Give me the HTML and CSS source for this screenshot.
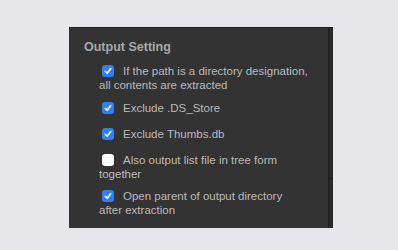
FILE: index.html
```html
<!DOCTYPE html>
<html lang="en">
<head>
    <meta charset="UTF-8">
    <title>Output Setting</title>
    <link rel="stylesheet" href="styles.css">
</head>
<body>
    <div class="window">
        <div class="panel">
            <h4 class="title">Output Setting</h4>
            <div class="options">
                <label class="option"><span class="check on"><svg viewBox="0 0 12 12"><path d="M3.2 6.3 L5.2 8.3 L8.8 3.6"/></svg></span>If the path is a directory designation, all contents are extracted</label>
                <label class="option"><span class="check on"><svg viewBox="0 0 12 12"><path d="M3.2 6.3 L5.2 8.3 L8.8 3.6"/></svg></span>Exclude .DS_Store</label>
                <label class="option"><span class="check on"><svg viewBox="0 0 12 12"><path d="M3.2 6.3 L5.2 8.3 L8.8 3.6"/></svg></span>Exclude Thumbs.db</label>
                <label class="option"><span class="check"></span>Also output list file in tree form together</label>
                <label class="option"><span class="check on"><svg viewBox="0 0 12 12"><path d="M3.2 6.3 L5.2 8.3 L8.8 3.6"/></svg></span>Open parent of output directory <span class="keep">after extraction</span></label>
            </div>
        </div>
        <div class="scrollbar">
            <div class="thumb-edge"></div>
        </div>
    </div>
</body>
</html>
```

FILE: styles.css
```css
* {
    margin: 0;
    padding: 0;
    box-sizing: border-box;
}

body {
    font-family: 'Liberation Sans', Arial, sans-serif;
    background-color: #e6e6eb;
    width: 398px;
    height: 250px;
    overflow: hidden;
}

.window {
    display: flex;
    width: 264px;
    height: 201px;
    margin: 27px 0 0 69px;
    border-top: 1px solid #1f1f1f;
}

.panel {
    flex: 1;
    background-color: #333333;
    border-right: 1px solid #1c1c1c;
    padding: 12px 0 0 15px;
}

.scrollbar {
    width: 4px;
    background-color: #2b2b2b;
}

.thumb-edge {
    margin-top: 150px;
    border-top: 1px solid #1d1d1d;
}

.title {
    font-size: 12.5px;
    line-height: 14px;
    font-weight: bold;
    color: #a8a8a8;
    margin-bottom: 10px;
}

.options {
    width: 210px;
    margin-left: 15px;
}

.option {
    display: block;
    font-size: 11.5px;
    line-height: 14px;
    min-height: 17.5px;
    margin-bottom: 8.5px;
    color: #bababa;
}

.keep {
    white-space: nowrap;
}

.check {
    display: inline-block;
    width: 12px;
    height: 12px;
    margin: 0 9px 0 3px;
    vertical-align: -2px;
    border-radius: 3px;
    background-color: #fdfdfd;
}

.check.on {
    background-color: #2f80f6;
}

.check svg {
    display: block;
    width: 12px;
    height: 12px;
    fill: none;
    stroke: #fff;
    stroke-width: 1.6;
    stroke-linecap: round;
    stroke-linejoin: round;
}
```
